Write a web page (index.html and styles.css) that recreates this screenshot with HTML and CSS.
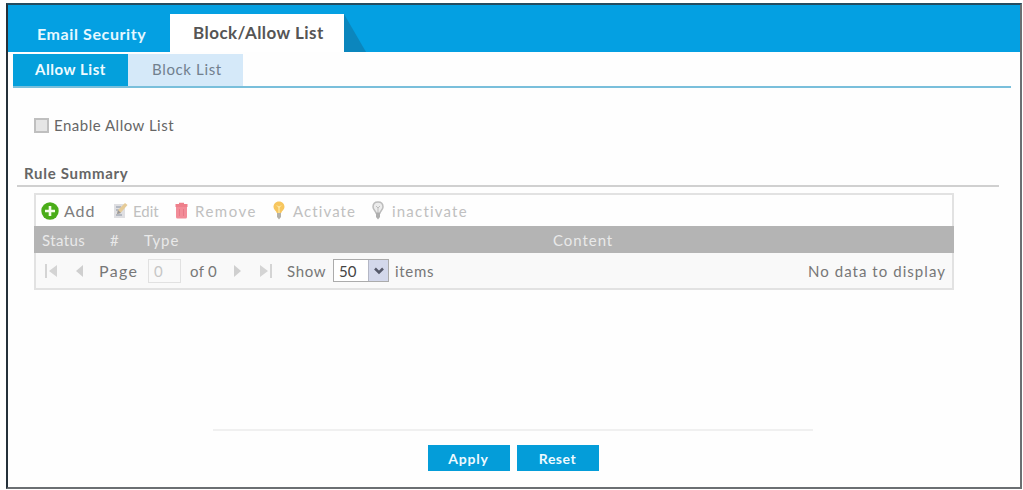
FILE: index.html
```html
<!DOCTYPE html>
<html lang="en">
<head>
<meta charset="utf-8">
<title>Block/Allow List</title>
<link rel="stylesheet" href="styles.css">
</head>
<body>
<main class="panel">
  <nav class="tabs">
    <a class="tab"><span class="t-email">Email Security</span></a>
    <a class="tab tab-on"><span class="t-bal">Block/Allow List</span></a>
    <svg class="fold" width="22" height="38" viewBox="0 0 22 38"><path d="M0 0 L22 38 H0Z" fill="#0b86bd"/></svg>
  </nav>
  <nav class="subtabs">
    <a class="subtab subtab-on"><span class="t-allow">Allow List</span></a>
    <a class="subtab"><span class="t-block">Block List</span></a>
  </nav>
  <label class="enable"><span class="check"></span><span class="t-enable">Enable Allow List</span></label>
  <h2 class="heading"><span class="t-rule">Rule Summary</span></h2>
  <section class="table">
    <div class="toolbar">
      <span class="tool tool-add"><svg width="18" height="18" viewBox="0 0 18 18"><circle cx="9" cy="9" r="8.7" fill="#4aad18"/><path d="M9 4v10M4 9h10" stroke="#f4ffe9" stroke-width="2.6"/></svg><span class="t-add">Add</span></span>
      <span class="tool tool-edit"><svg width="15" height="17" viewBox="0 0 15 17"><path d="M1 2h11v14H1z" fill="#dfdfe2"/><path d="M3 5h5M3 8h3M3 13h6" stroke="#a7adb8" stroke-width="1.5"/><path d="M4 12l1-4 7-7 2.500 2-7 8z" fill="#e6cb97"/><path d="M4 12l1-4 3 3z" fill="#96979c"/></svg><span class="t-edit">Edit</span></span>
      <span class="tool tool-remove"><svg width="13" height="17" viewBox="0 0 13 17"><path d="M4 2V.7h5V2h3.500v3H.5V2z" fill="#ee7f8b"/><path d="M1 5h11v10q0 1.500-1.500 1.500h-8Q1 16.500 1 15z" fill="#f28c98"/><path d="M4.500 7v7M8.500 7v7" stroke="#e87987"/></svg><span class="t-remove">Remove</span></span>
      <span class="tool tool-act"><svg width="12" height="19" viewBox="0 0 12 19"><path d="M6 .5C2.500.5.5 3 .5 6c0 2.500 2.800 4 3.300 6h4.400c.5-2 3.300-3.500 3.300-6 0-3-2-5.500-5.500-5.500z" fill="#f7c65e"/><path d="M6 5v7M4 4.500l2 2 2-2" stroke="#fff0b5" fill="none"/><path d="M4 12h4v4l-2 2.500L4 16z" fill="#b4b1a8"/></svg><span class="t-activate">Activate</span></span>
      <span class="tool tool-inact"><svg width="12" height="19" viewBox="0 0 12 19"><path d="M6 1C3 1 1 3 1 6c0 2.500 2.600 4 3 6h4c.4-2 3-3.500 3-6 0-3-2-5-5-5z" fill="#ececec" stroke="#bcbcbc" stroke-width="1.5"/><path d="M6 6v6M4 5l2 2 2-2" stroke="#bdbdbd" fill="none"/><path d="M4 12h4v4l-2 2.500L4 16z" fill="#aeaeae"/></svg><span class="t-inactivate">inactivate</span></span>
    </div>
    <div class="thead"><span class="t-status">Status</span><span class="t-hash">#</span><span class="t-type">Type</span><span class="t-content">Content</span></div>
    <div class="pager">
      <svg class="nav first" width="14" height="14" viewBox="0 0 14 14"><path d="M1 0h2v14H1zM13 1v12L5 7z" fill="#d4d4d4"/></svg>
      <svg class="nav prev" width="7" height="14" viewBox="0 0 7 14"><path d="M7 1v12L0 7z" fill="#cfcfcf"/></svg>
      <span class="t-page">Page</span>
      <span class="field"><span class="t-zero">0</span></span>
      <span class="t-of">of 0</span>
      <svg class="nav next" width="7" height="14" viewBox="0 0 7 14"><path d="M0 1v12l7-6z" fill="#cfcfcf"/></svg>
      <svg class="nav last" width="13" height="14" viewBox="0 0 13 14"><path d="M10 0h2v14h-2zM0 1v12l8-6z" fill="#d4d4d4"/></svg>
      <span class="t-show">Show</span>
      <span class="select"><span class="t-fifty">50</span><span class="drop"><svg width="10" height="8" viewBox="0 0 10 8"><path d="M1 1.500l4 4 4-4" fill="none" stroke="#55596a" stroke-width="2.500"/></svg></span></span>
      <span class="t-items">items</span>
      <span class="t-nodata">No data to display</span>
    </div>
  </section>
  <footer class="actions">
    <button class="button"><span class="t-apply">Apply</span></button>
    <button class="button"><span class="t-reset">Reset</span></button>
  </footer>
</main>
</body>
</html>
```
FILE: styles.css
```css
* { box-sizing: border-box; }
body { margin: 0; background: #fff; font-family: Lato, "Open Sans", sans-serif; font-size: 15px; color: #666; }
svg { display: block; flex: none; }
span { white-space: nowrap; }
.panel { width: 1016px; height: 486px; margin: 3px 0 0 6px; border: 2px solid #6b6f72; border-left-color: #25313a; border-top-color: #244c60; background: #fefefe; display: flex; flex-direction: column; }
.tabs { height: 47px; flex: none; background: #04a0e2; display: flex; align-items: flex-end; }
.tab { width: 162px; height: 38px; padding-left: 29px; display: flex; align-items: center; color: #e6f8ff; font-weight: 700; }
.tab-on { width: 174px; padding-left: 23px; background: #fff; color: #555; padding-bottom: 2px; }
.subtabs { height: 36px; flex: none; margin: 0 9px 0 5px; padding-top: 2px; border-bottom: 2px solid #79bfdb; display: flex; }
.subtab { width: 115px; padding: 0 0 2px 24px; background: #d5e9f9; color: #71808e; display: flex; align-items: center; }
.subtab-on { padding-left: 22px; background: #04a0dc; color: #f0fbff; font-weight: 700; }
.enable { height: 16px; margin: 29px 0 0 26px; display: flex; align-items: center; gap: 5px; }
.check { width: 15px; height: 15px; border: 2px solid #bfbfbf; background: #e5e5e5; }
.heading { height: 54px; flex: none; margin: 0 21px 0 9px; padding: 0 0 2px 7px; border-bottom: 2px solid #d0d0d0; display: flex; align-items: flex-end; font-size: 15px; line-height: 20px; font-weight: 700; color: #666; }
.table { width: 920px; height: 97px; flex: none; margin: 6px 0 0 26px; border: 2px solid #e2e2e2; }
.toolbar { height: 31px; display: flex; align-items: center; }
.tool { display: flex; align-items: center; color: #c0c0c0; flex: none; }
.tool-add { width: 77px; padding-left: 5px; gap: 5px; color: #7d7d7d; }
.tool-edit { width: 62px; gap: 5px; }
.tool-remove { width: 98px; gap: 7px; }
.tool-act { width: 99px; gap: 8px; }
.tool-inact { gap: 8px; }
.thead { height: 27px; margin: 0 -2px; padding-left: 8px; background: #b4b4b4; color: #e9e9e9; display: grid; grid-template-columns: 68px 34px 409px 1fr; align-items: center; }
.pager { height: 35px; background: #f9f9f9; display: flex; align-items: center; color: #777; }
.first { margin-left: 8px; }
.prev { margin: 0 16px 0 18px; }
.t-page { width: 49px; }
.field { width: 33px; height: 24px; border: 1px solid #e1e1e1; margin-right: 9px; padding-left: 5px; display: flex; align-items: center; color: #c6c6c6; }
.t-of { width: 44px; }
.next { margin-right: 19px; }
.last { margin-right: 14px; }
.t-show { width: 46px; }
.select { width: 56px; height: 23px; margin-right: 6px; padding-left: 5px; border: 1px solid #ababab; display: flex; justify-content: space-between; align-items: center; background: #fff; color: #444; }
.drop { width: 20px; height: 21px; background: #d3d8eb; border-left: 1px solid #b4b7c5; display: flex; align-items: center; justify-content: center; }
.t-nodata { margin-left: auto; margin-right: 6px; letter-spacing: 1.05px; }
.actions { width: 600px; margin: 139px 0 0 205px; padding-top: 14px; border-top: 2px solid #f0f0f0; display: flex; gap: 7px; justify-content: center; }
.button { width: 82px; height: 26px; padding: 0; border: 0; background: #049dd9; color: #eefaff; font: 700 14px Lato, sans-serif; }
.t-email { font-size: 16px; letter-spacing: .6px; }
.t-bal { font-size: 17px; letter-spacing: .45px; }
.t-allow { letter-spacing: .55px; }
.t-block { letter-spacing: .65px; }
.t-enable { letter-spacing: .5px; }
.t-rule { letter-spacing: .7px; }
.t-add { font-size: 16px; letter-spacing: .9px; }
.t-remove { letter-spacing: 1.5px; }
.t-activate { letter-spacing: 1.1px; }
.t-inactivate { letter-spacing: 1.2px; }
.t-status { letter-spacing: .4px; }
.t-type { letter-spacing: .9px; }
.t-content { letter-spacing: .95px; }
.t-page { font-size: 16px; letter-spacing: 1.3px; }
.t-of { letter-spacing: .3px; }
.t-show { letter-spacing: .7px; }
.t-items { letter-spacing: .7px; }
.t-apply { letter-spacing: .8px; }
.t-reset { letter-spacing: .5px; }
```
